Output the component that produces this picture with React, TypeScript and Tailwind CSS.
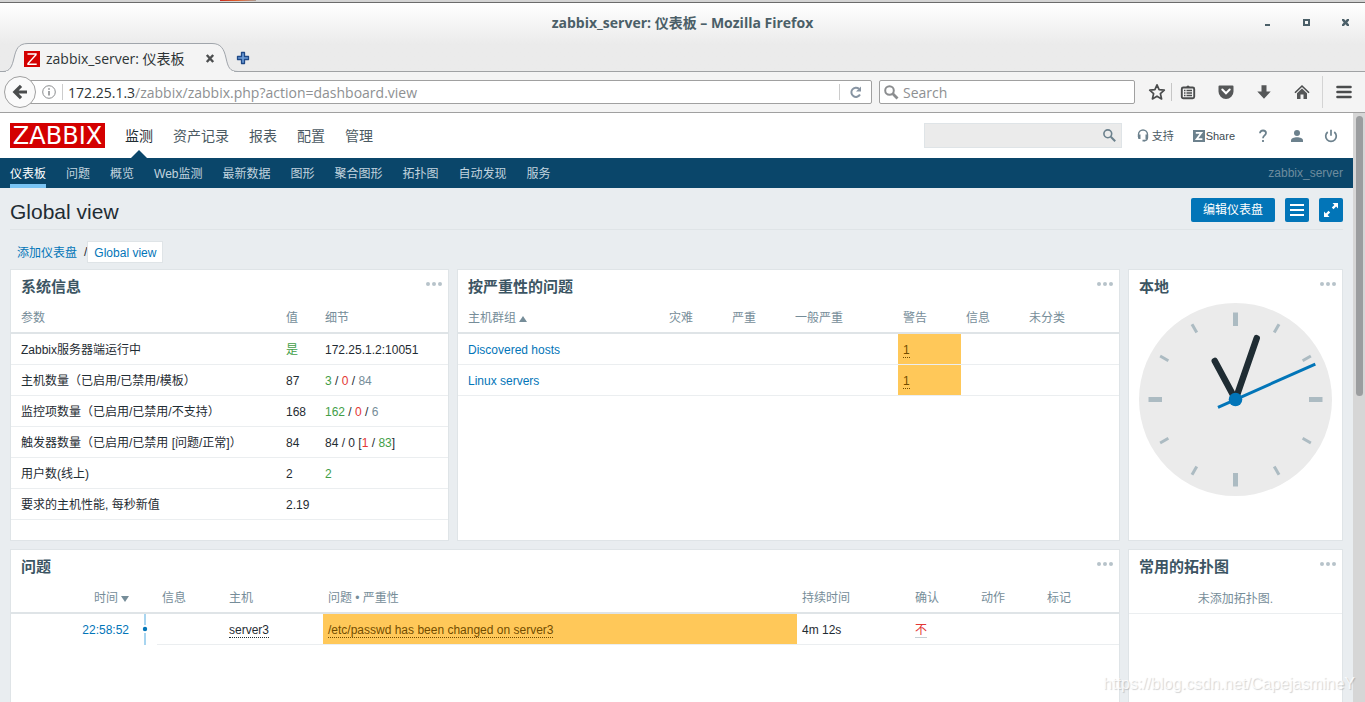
import type { ReactNode } from "react";
import clsx from "clsx";

const MAIN_MENU = ["监测", "资产记录", "报表", "配置", "管理"];
const SUB_MENU = ["仪表板", "问题", "概览", "Web监测", "最新数据", "图形", "聚合图形", "拓扑图", "自动发现", "服务"];

const GREEN = "text-[#429e47]";
const RED = "text-[#e33734]";
const GREY = "text-[#768d99]";

const SYSTEM_INFO: { name: string; value: string; color?: string; details: [string, string?][] }[] = [
  { name: "Zabbix服务器端运行中", value: "是", color: GREEN, details: [["172.25.1.2:10051"]] },
  { name: "主机数量（已启用/已禁用/模板）", value: "87", details: [["3", GREEN], [" / "], ["0", RED], [" / "], ["84", GREY]] },
  { name: "监控项数量（已启用/已禁用/不支持）", value: "168", details: [["162", GREEN], [" / "], ["0", RED], [" / "], ["6", GREY]] },
  { name: "触发器数量（已启用/已禁用 [问题/正常]）", value: "84", details: [["84 / 0 ["], ["1", RED], [" / "], ["83", GREEN], ["]"]] },
  { name: "用户数(线上)", value: "2", details: [["2", GREEN]] },
  { name: "要求的主机性能, 每秒新值", value: "2.19", details: [] },
];

const HOST_GROUPS = [
  { name: "Discovered hosts", warning: 1 },
  { name: "Linux servers", warning: 1 },
];

export default function App() {
  return (
    <div className="relative flex h-screen flex-col overflow-hidden bg-[#e9edf0] font-['Liberation_Sans','Noto_Sans_CJK_SC',sans-serif] text-[12px] leading-4 text-[#1f2c33]">
      <BrowserChrome />
      <div className="flex min-h-0 flex-1">
        <main className="min-w-0 flex-1 overflow-hidden">
          <TopHeader />
          <SubNav />
          <div className="px-[10px]">
            <PageTitle />
            <Breadcrumbs />
            <Dashboard />
          </div>
        </main>
        <div className="w-3 shrink-0 bg-[#d6d6d6] py-[3px] pl-[3px] pr-[2px]">
          <div className="h-[48%] rounded-full bg-[#9b9d9f]" />
        </div>
      </div>
      <p className="pointer-events-none absolute bottom-2 right-[10px] text-[16px] leading-5 text-white/80 [text-shadow:1px_1px_1px_rgba(0,0,0,0.18)]">
        https://blog.csdn.net/CapejasmineY
      </p>
    </div>
  );
}

/* ---------- browser window ---------- */

function BrowserChrome() {
  return (
    <div className="shrink-0 font-['Open_Sans','Noto_Sans_CJK_SC',sans-serif]">
      <div className="h-[3px] border-b border-[#6b6b6b] bg-[#d4d4d4]">
        <div className="ml-[220px] h-px w-9 bg-linear-to-r from-[#c8281e] via-[#e0602c] to-[#a89a90]" />
      </div>
      <div className="bg-linear-to-b from-white to-[#ebebeb] to-60%">
        <div className="grid h-10 grid-cols-[1fr_auto_1fr] items-center">
          <span />
          <h1 className="text-[14px] font-bold leading-5 text-[#4b5f68]">
            zabbix_server: 仪表板 – Mozilla Firefox
          </h1>
          <div className="flex justify-end pb-[2px] pr-[5px]">
            <WindowButton label="Minimize"><path d="M4 9h5v2H4z" /></WindowButton>
            <WindowButton label="Maximize"><path fillRule="evenodd" d="M3 4h7v7H3zM5 6v3h3V6z" /></WindowButton>
            <WindowButton label="Close"><path d="M3 4h2l1.500 1.700L8 4h2v1.500L8.300 7.500 10 9.500V11H8L6.500 9.300 5 11H3V9.500l1.700-2L3 5.500z" /></WindowButton>
          </div>
        </div>
        <div className="flex h-[29px] border-b border-[#a0a2a4]">
          <div className="relative -mb-px h-[29px] w-[240px]">
            <svg className="absolute inset-0" width="240" height="29" viewBox="0 0 240 29" aria-hidden="true">
              <path
                d="M0 28.500h3c7 0 9-5 11-13.500S18 .5 28 .5h184c9 0 12 5.500 14 14.500s3.500 13.500 12 13.500h2"
                fill="#f4f4f4"
                stroke="#a0a5ab"
              />
              <path d="M6 28.500h228" stroke="#f4f4f4" />
            </svg>
            <div className="relative flex h-7 items-center pl-6 pt-[3px]">
              <svg width="16" height="16" viewBox="0 0 16 16" aria-hidden="true">
                <path fill="#d40000" d="M0 0h16v16H0z" />
                <path fill="none" stroke="#fff" strokeWidth="1.400" d="M3.500 3h8.500v.7L4 12.500v.7h8.700" />
              </svg>
              <span className="ml-[6px] w-[157px] text-[14px] leading-5 text-[#2e3436]">zabbix_server: 仪表板</span>
              <button aria-label="Close tab" className="flex">
                <svg width="14" height="14" viewBox="0 0 14 14" stroke="#4d4f50" strokeWidth="2.400">
                  <path d="m3.800 3 6.400 7M10.200 3l-6.400 7" />
                </svg>
              </button>
            </div>
          </div>
          <button aria-label="New tab" className="-ml-1 flex items-center pt-px">
            <svg width="14" height="14" viewBox="0 0 14 14">
              <path d="M5.500 1.500h3v4h4v3h-4v4h-3v-4h-4v-3h4z" fill="#6b9bd6" stroke="#204a87" strokeWidth="1.300" strokeLinejoin="round" />
            </svg>
          </button>
        </div>
      </div>
      <div className="flex h-[41px] items-center border-b border-[#a0a0a0] bg-[#f4f4f4] pl-1">
        <button
          aria-label="Back"
          className="relative z-10 flex size-8 shrink-0 items-center justify-center rounded-full border border-[#a0a0a0] bg-[#fafafa]"
        >
          <svg width="16" height="16" viewBox="0 0 16 16" fill="none" stroke="#4a4c4d" strokeWidth="3.200">
            <path d="M15 8H4M9 1.800 2.800 8 9 14.200" />
          </svg>
        </button>
        <div className="-ml-2 flex h-6 min-w-0 flex-1 items-center rounded-r-xs border border-[#a0a0a0] bg-white">
          <svg className="ml-[13px] shrink-0" width="14" height="14" viewBox="0 0 14 14" fill="none" stroke="#8b8d8f">
            <circle cx="7" cy="7" r="6.300" />
            <path strokeWidth="1.600" d="M7 6v4.500M7 3.300v1.500" />
          </svg>
          <div className="ml-[6px] h-4 border-l border-[#ccc]" />
          <a href="#url" className="ml-[5px] min-w-0 flex-1 truncate pt-[2px] text-[14px] leading-5 text-[#8e9092]">
            <span className="text-[#2e3436]">172.25.1.3</span>/zabbix/zabbix.php?action=dashboard.view
          </a>
          <button aria-label="Reload" className="flex h-4 w-8 items-center justify-center border-l border-[#ccc]">
            <svg width="14" height="14" viewBox="0 0 14 14">
              <path d="M11 9.500A4.600 4.600 0 1 1 10 3.800" fill="none" stroke="#8794a2" strokeWidth="2" />
              <path d="M12 1.500v5H7z" fill="#8794a2" />
            </svg>
          </button>
        </div>
        <label className="ml-[7px] flex h-6 w-64 items-center rounded-xs border border-[#a0a0a0] bg-white pl-1">
          <svg width="15" height="15" viewBox="0 0 15 15" fill="none" stroke="#8b8d8f" strokeWidth="2">
            <circle cx="5.500" cy="5.500" r="4.300" />
            <path strokeWidth="2.800" d="m8.800 8.800 4.700 4.700" />
          </svg>
          <input
            aria-label="Search the web"
            placeholder="Search"
            className="ml-1 min-w-0 flex-1 pt-[2px] text-[14px] leading-5 outline-none placeholder:text-[#8e9092]"
          />
        </label>
        <button aria-label="Bookmark" className="ml-2 flex h-[18px] w-[29px] items-center justify-center border-r border-[#c6c6c6]">
          <svg width="18" height="18" viewBox="0 0 18 18" fill="none" stroke="#4a4c4d" strokeWidth="1.700" strokeLinejoin="round">
            <path d="m9 1.800 2.100 4.800 5.200.6-3.900 3.500 1.200 5.200L9 13.200l-4.600 2.700 1.200-5.200L1.700 7.200l5.200-.6z" />
          </svg>
        </button>
        <div className="flex gap-[6px]">
          <ToolButton label="Library">
            <path d="M5.500 3.500 8 1.200l2.500 2.300z" fill="#4a4c4d" />
            <rect x="1.800" y="3.500" width="12.400" height="10.800" rx="1.500" fill="none" stroke="#4a4c4d" strokeWidth="1.900" />
            <path d="M4 6.500h1.500M6.500 6.500H12M4 9h1.500M6.500 9H12M4 11.500h1.500M6.500 11.500H12" stroke="#4a4c4d" strokeWidth="1.300" />
          </ToolButton>
          <ToolButton label="Pocket">
            <path d="M1.500 1.500h13a1 1 0 0 1 1 1V7.500a7.500 7.500 0 0 1-15 0V2.500a1 1 0 0 1 1-1z" fill="#555758" />
            <path d="m4.300 5.500 3.700 3.800 3.700-3.800" fill="none" stroke="#fff" strokeWidth="2" strokeLinecap="round" />
          </ToolButton>
          <ToolButton label="Downloads">
            <path d="M5.500 1.200h5v6.300h4.200L8 14.800 1.300 7.500h4.200z" fill="#555758" />
          </ToolButton>
          <ToolButton label="Home">
            <path d="M1 8.800 8 2l7 6.800" fill="none" stroke="#4a4c4d" strokeWidth="1.600" />
            <path d="M3 9.200 8 4.500l5 4.700V15H9.500v-4.500h-3V15H3z" fill="#555758" />
          </ToolButton>
        </div>
        <button aria-label="Menu" className="ml-1 flex h-8 w-[43px] items-center justify-center border-l border-[#d4d4d4]">
          <svg width="16" height="14" viewBox="0 0 16 14" stroke="#4a4c4d" strokeWidth="2.600" strokeLinecap="round">
            <path d="M1.500 2h13M1.500 7h13M1.500 12h13" />
          </svg>
        </button>
      </div>
    </div>
  );
}

function WindowButton({ label, children }: { label: string; children: ReactNode }) {
  return (
    <button aria-label={label} className="flex w-[39px] justify-end pr-2">
      <svg width="13" height="15" viewBox="0 0 13 15" fill="#4b5f68">{children}</svg>
    </button>
  );
}

function ToolButton({ label, children }: { label: string; children: ReactNode }) {
  return (
    <button aria-label={label} className="flex size-8 items-center justify-center">
      <svg width="16" height="16" viewBox="0 0 16 16">{children}</svg>
    </button>
  );
}

/* ---------- zabbix header ---------- */

function TopHeader() {
  return (
    <header className="flex h-[45px] items-center bg-white pl-[10px] pr-[15px]">
      <a href="#home" className="flex h-[25px] w-[95px] items-center justify-center bg-[#d40000] font-['DejaVu_Sans',sans-serif] text-[24px] leading-6 text-white">
        ZABBIX
      </a>
      <nav className="ml-5 flex gap-5 self-stretch text-[14px] leading-5">
        {MAIN_MENU.map((item, i) => (
          <a
            key={item}
            href="#menu"
            className={clsx("relative flex items-center", i === 0 ? "text-[#1f2c33]" : "text-[#4b5a63]")}
          >
            {item}
            {i === 0 && (
              <svg className="absolute bottom-0 left-[6px]" width="16" height="8" viewBox="0 0 16 8">
                <path d="M0 8 8 0l8 8z" fill="#0a466a" />
              </svg>
            )}
          </a>
        ))}
      </nav>
      <div className="ml-auto flex h-[25px] w-[198px] items-center border border-[#dfe4e7] bg-[#ebebeb] pr-[5px]">
        <input aria-label="搜索" className="min-w-0 flex-1 px-1 outline-none" />
        <button aria-label="搜索" className="flex">
          <svg width="13" height="13" viewBox="0 0 13 13" fill="none" stroke="#6c818d">
            <circle cx="4.800" cy="4.800" r="3.900" strokeWidth="1.600" />
            <path strokeWidth="2" d="m7.800 7.800 4.400 4.400" />
          </svg>
        </button>
      </div>
      <a href="#support" className="ml-[15px] flex items-center gap-[3px] text-[11px] text-[#4b5a63]">
        <svg width="12" height="13" viewBox="0 0 12 13">
          <path d="M1.500 8V5.500a4.500 4.500 0 0 1 9 0V8.500c0 2-1 3-3 3.200" fill="none" stroke="#6c818d" strokeWidth="1.400" />
          <path d="M1 5.500h2.500V10H2a1 1 0 0 1-1-1zM8.500 5.500H11V9a1 1 0 0 1-1 1H8.500zM5.500 10.800H8V12.500H5.500z" fill="#6c818d" />
        </svg>
        支持
      </a>
      <a href="#share" className="ml-[19px] flex items-center gap-px text-[11px] text-[#3c4a52]">
        <svg width="12" height="12" viewBox="0 0 12 12">
          <path fill="#6c818d" d="M0 0h12v12H0z" />
          <path fill="none" stroke="#fff" strokeWidth="1.700" d="M2.800 2.800h5.600L3.600 9.200h5.800" />
        </svg>
        Share
      </a>
      <a href="#help" aria-label="帮助" className="ml-[23px]">
        <svg width="10" height="14" viewBox="0 0 10 14" fill="none" stroke="#6c818d" strokeWidth="1.800">
          <path d="M2 4.300C2 2.500 3.200 1.500 5 1.500s3 1 3 2.600C8 6.300 5 6.500 5 9.200M5 11v2" />
        </svg>
      </a>
      <a href="#profile" aria-label="用户" className="ml-[23px]">
        <svg width="12" height="12" viewBox="0 0 12 12" fill="#6c818d">
          <circle cx="6" cy="3" r="3" />
          <path d="M0 12v-1.500C0 8.300 3 7.300 6 7.300s6 1 6 3.200V12z" />
        </svg>
      </a>
      <a href="#logout" aria-label="退出" className="ml-[21px]">
        <svg width="14" height="14" viewBox="0 0 14 14" fill="none" stroke="#6c818d" strokeWidth="1.700">
          <path d="M3.700 3A5.300 5.300 0 1 0 10.300 3M7 .8v6" />
        </svg>
      </a>
    </header>
  );
}

function SubNav() {
  return (
    <nav className="flex h-[30px] gap-5 bg-[#0a466a] px-[10px] text-[12px]">
      {SUB_MENU.map((item, i) => (
        <a
          key={item}
          href="#sub"
          className={clsx(
            "flex items-center border-b-4 pt-[6px]",
            i === 0 ? "border-[#7ac4f4] text-white" : "border-transparent text-[#c2d4df]",
          )}
        >
          {item}
        </a>
      ))}
      <span className="ml-auto self-center text-[#6d8c9e]">zabbix_server</span>
    </nav>
  );
}

function PageTitle() {
  return (
    <div className="flex h-[42px] items-center gap-[10px] border-b border-[#dfe4e7] pt-[2px]">
      <h2 className="mr-auto pt-1 text-[21px] leading-6">Global view</h2>
      <button className="h-6 rounded-xs bg-[#0275b8] px-3 text-white">编辑仪表盘</button>
      <button aria-label="操作" className="flex size-6 items-center justify-center rounded-xs bg-[#0275b8]">
        <svg width="14" height="12" viewBox="0 0 14 12" fill="#fff">
          <path d="M0 0h14v2H0zM0 5h14v2H0zM0 10h14v2H0z" />
        </svg>
      </button>
      <button aria-label="全屏" className="flex size-6 items-center justify-center rounded-xs bg-[#0275b8]">
        <svg width="14" height="14" viewBox="0 0 14 14" fill="#fff">
          <path d="M8.500 0H14v5.500l-1.900-1.900-2.600 2.600-1.700-1.700 2.600-2.600zM5.500 14H0V8.500l1.900 1.900 2.600-2.600 1.700 1.700-2.600 2.600z" />
        </svg>
      </button>
    </div>
  );
}

function Breadcrumbs() {
  return (
    <div className="flex items-center pb-[6px] pl-[7px] pt-[11px] text-[#0275b8]">
      <a href="#dashboards" className="pt-[2px]">添加仪表盘</a>
      <span className="ml-[7px] text-[#1f2c33]">/</span>
      <a href="#global" className="border border-[#dfe4e7] bg-white px-[6px] pb-px pt-[3px]">
        Global view
      </a>
    </div>
  );
}

/* ---------- widgets ---------- */

function Dashboard() {
  return (
    <div className="grid grid-cols-[439fr_663fr_215fr] gap-2">
      <Widget title="系统信息"><SystemInfo /></Widget>
      <Widget title="按严重性的问题"><ProblemsBySeverity /></Widget>
      <Widget title="本地"><Clock /></Widget>
      <Widget title="问题" className="col-span-2"><Problems /></Widget>
      <Widget title="常用的拓扑图">
        <p className="flex h-8 items-center justify-center border-b border-[#ebeef0] pt-[2px] text-[#768d99]">未添加拓扑图.</p>
      </Widget>
    </div>
  );
}

function Widget({ title, className, children }: { title: string; className?: string; children: ReactNode }) {
  return (
    <section className={clsx("min-h-[272px] min-w-0 border border-[#dfe4e7] bg-white", className)}>
      <div className="flex h-8 items-center justify-between pl-[10px] pr-[6px]">
        <h3 className="pt-[2px] text-[15px] font-bold leading-5 text-[#3c5563]">{title}</h3>
        <button aria-label={`${title} 菜单`} className="flex pb-1">
          <svg width="16" height="4" viewBox="0 0 16 4" fill="#b7c3ca">
            <circle cx="2" cy="2" r="2" />
            <circle cx="8" cy="2" r="2" />
            <circle cx="14" cy="2" r="2" />
          </svg>
        </button>
      </div>
      {children}
    </section>
  );
}

function Th({ className, children }: { className?: string; children?: ReactNode }) {
  return (
    <th className={clsx("h-8 whitespace-nowrap border-b-2 border-[#dfe4e7] px-[5px] pb-0 pt-[2px] text-left font-normal text-[#768d99] first:pl-[10px]", className)}>
      {children}
    </th>
  );
}

function Td({ className, children }: { className?: string; children?: ReactNode }) {
  return (
    <td className={clsx("h-[31px] whitespace-nowrap border-b border-[#ebeef0] px-[5px] pb-0 pt-[2px] first:pl-[10px]", className)}>
      {children}
    </td>
  );
}

function SystemInfo() {
  return (
    <table className="w-full table-fixed border-separate border-spacing-0">
      <thead>
        <tr>
          <Th>参数</Th>
          <Th className="w-[39px]">值</Th>
          <Th className="w-32">细节</Th>
        </tr>
      </thead>
      <tbody>
        {SYSTEM_INFO.map((row) => (
          <tr key={row.name}>
            <Td>{row.name}</Td>
            <Td className={row.color}>{row.value}</Td>
            <Td>
              {row.details.map(([text, color], i) => (
                <span key={i} className={color}>{text}</span>
              ))}
            </Td>
          </tr>
        ))}
      </tbody>
    </table>
  );
}

function ProblemsBySeverity() {
  return (
    <table className="w-full table-fixed border-separate border-spacing-0">
      <thead>
        <tr>
          <Th>
            主机群组
            <svg className="ml-[3px] inline-block" width="8" height="6" viewBox="0 0 8 6" fill="#768d99"><path d="M4 0l4 6H0z" /></svg>
          </Th>
          <Th className="w-[63px]">灾难</Th>
          <Th className="w-[63px]">严重</Th>
          <Th className="w-[108px]">一般严重</Th>
          <Th className="w-[63px]">警告</Th>
          <Th className="w-[63px]">信息</Th>
          <Th className="w-[95px]">未分类</Th>
        </tr>
      </thead>
      <tbody>
        {HOST_GROUPS.map((group) => (
          <tr key={group.name}>
            <Td><a href="#group" className="text-[#0275b8]">{group.name}</a></Td>
            <Td />
            <Td />
            <Td />
            <Td className="bg-[#ffc859]">
              <a href="#warning" className="border-b border-dotted border-[#734d00] text-[#734d00]">{group.warning}</a>
            </Td>
            <Td />
            <Td />
          </tr>
        ))}
      </tbody>
    </table>
  );
}

function Clock() {
  return (
    <div className="px-[10px] pt-px">
      <svg className="w-full" viewBox="-96.5 -96.5 193 193" role="img" aria-label="本地">
        <circle r="96.500" fill="#ebebeb" />
        {Array.from({ length: 12 }, (_, i) => (
          <path
            key={i}
            d={i % 3 === 0 ? "M0-87V-73.500" : "M0-87V-77.500"}
            transform={`rotate(${i * 30})`}
            stroke="#acbbc2"
            strokeWidth={i % 3 === 0 ? 5 : 3}
          />
        ))}
        <g stroke="#1f2c33" strokeWidth="6.500" strokeLinecap="round">
          <path d="M0 0-20.700-38.500" />
          <path d="M0 0 21.200-61.300" />
        </g>
        <path d="M-17.500 7.800 79.800-35.400" stroke="#0275b8" strokeWidth="3" />
        <circle r="6.800" fill="#0275b8" />
      </svg>
    </div>
  );
}

function Problems() {
  return (
    <table className="w-full table-fixed border-separate border-spacing-0">
      <thead>
        <tr>
          <Th className="w-[123px] text-right">
            时间
            <svg className="ml-[3px] inline-block" width="8" height="6" viewBox="0 0 8 6" fill="#768d99"><path d="M0 0h8L4 6z" /></svg>
          </Th>
          <Th className="w-[23px]" />
          <Th className="w-[67px]">信息</Th>
          <Th className="w-[99px]">主机</Th>
          <Th>问题 • 严重性</Th>
          <Th className="w-[113px]">持续时间</Th>
          <Th className="w-[66px]">确认</Th>
          <Th className="w-[66px]">动作</Th>
          <Th className="w-[77px]">标记</Th>
        </tr>
      </thead>
      <tbody>
        <tr>
          <td className="px-[5px] pb-0 pt-px text-right"><a href="#event" className="text-[#0275b8]">22:58:52</a></td>
          <td className="h-[31px] p-0">
            <svg className="ml-2" width="6" height="31" viewBox="0 0 6 31" aria-hidden="true">
              <path d="M3 0v11M3 19v12" stroke="#a8d5f0" strokeWidth="2" />
              <circle cx="3" cy="15" r="2.200" fill="#0275b8" />
            </svg>
          </td>
          <Td />
          <Td><a href="#host" className="border-b border-dotted border-[#1f2c33]">server3</a></Td>
          <Td className="bg-[#ffc859]">
            <a href="#problem" className="border-b border-dotted border-[#734d00] text-[#734d00]">
              /etc/passwd has been changed on server3
            </a>
          </Td>
          <Td>4m 12s</Td>
          <Td><a href="#ack" className="border-b border-[#c7cfd4] text-[#e33734]">不</a></Td>
          <Td />
          <Td />
        </tr>
      </tbody>
    </table>
  );
}
